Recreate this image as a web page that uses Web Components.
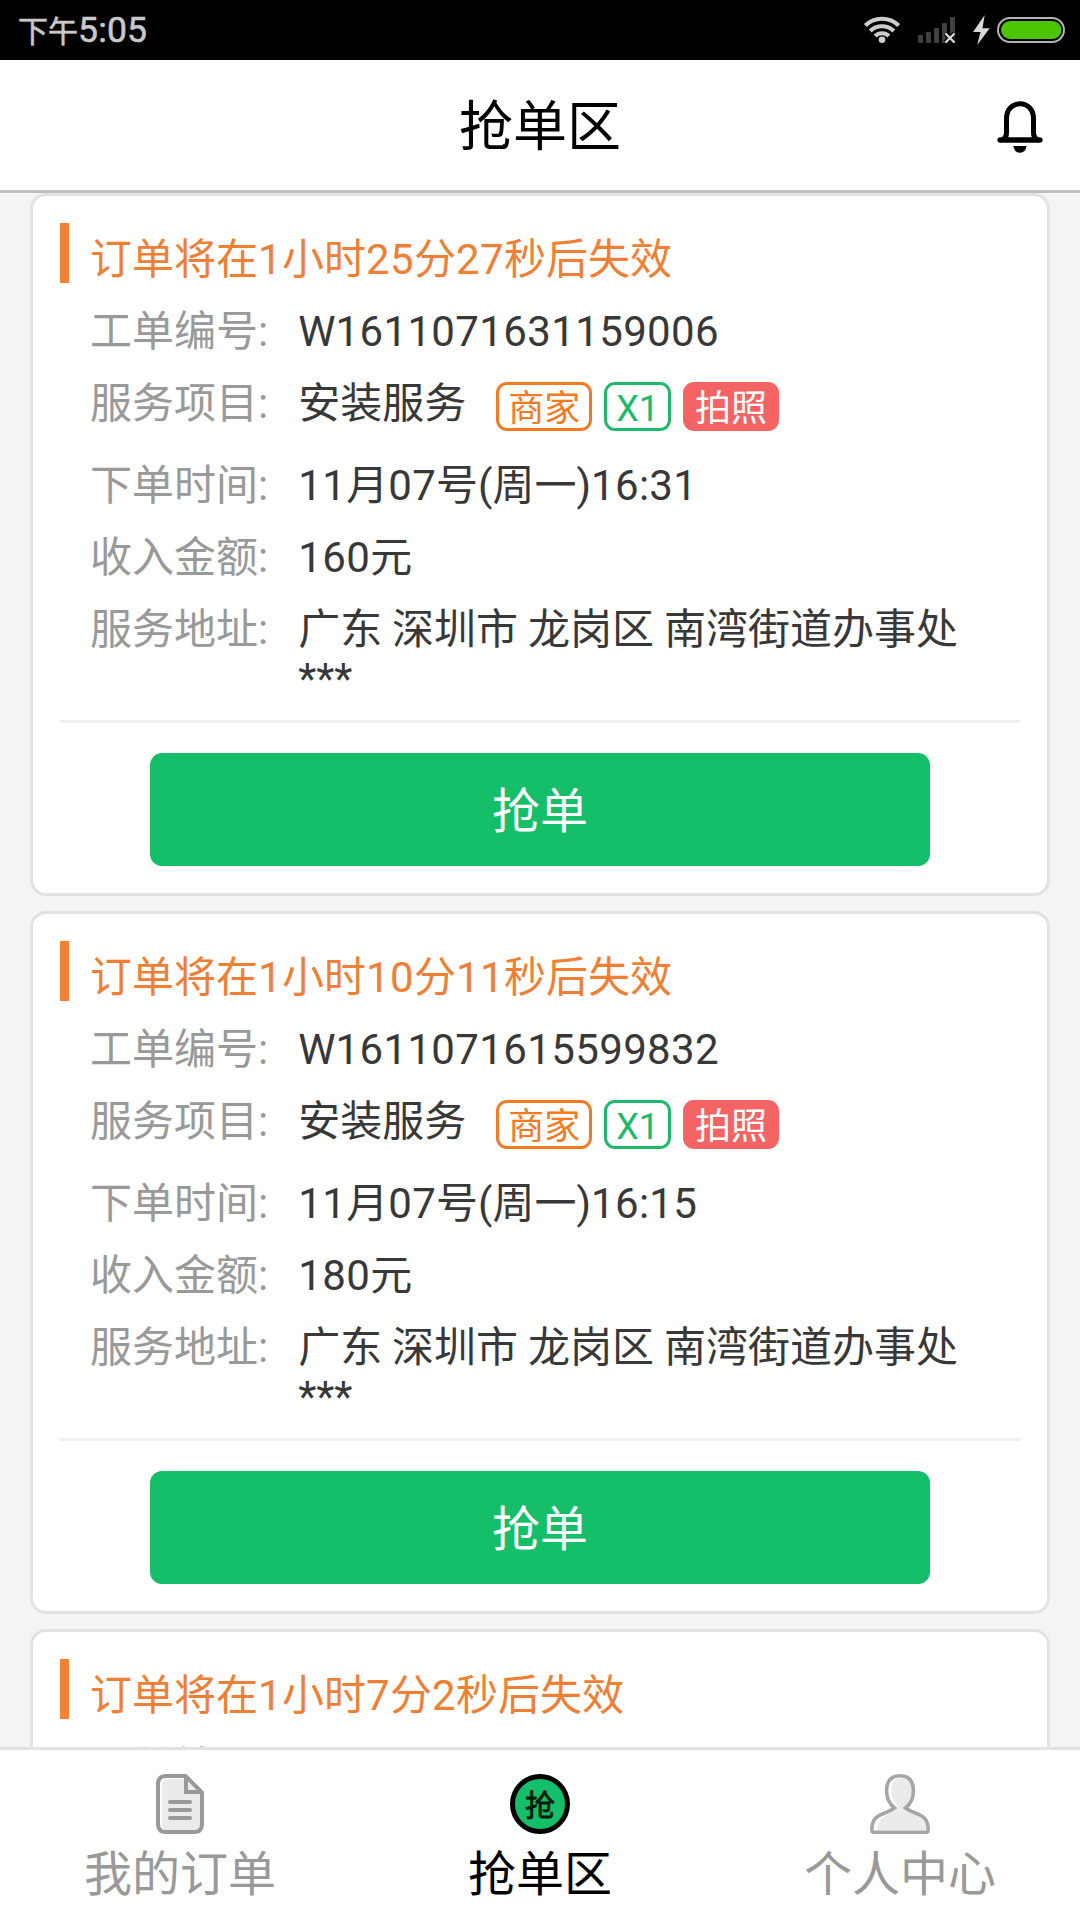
<!DOCTYPE html>
<html lang="zh-CN">
<head>
<meta charset="utf-8">
<title>抢单区</title>
<style>
html,body{margin:0;padding:0}
body{width:1080px;height:1920px;overflow:hidden;background:#f4f4f4;font-family:Roboto,"Noto Sans CJK SC",sans-serif;color:#383838}
</style>
</head>
<body>
<grab-app></grab-app>
<script>
const define = (name, html, init) => {
  const t = document.createElement('template');
  t.innerHTML = html;
  customElements.define(name, class extends HTMLElement {
    constructor() {
      super();
      this.attachShadow({mode: 'open'}).append(t.content.cloneNode(true));
    }
    connectedCallback() { if (init) init(this, this.shadowRoot); }
  });
};
// Digits sit on a whole-pixel advance; wrap each run so only digits are spaced.
const spaced = s => s.replace(/\d+/g, '<b>$&</b>');

define('status-bar', `
<style>
:host{display:flex;height:60px;flex:none;background:#000;color:#c8c8c8;justify-content:space-between;align-items:flex-start;padding:0 10px 0 18px;box-sizing:border-box}
.time{display:flex;align-items:baseline;line-height:58px;padding-top:1px;-webkit-text-stroke:.6px #c8c8c8}
.cn{font-size:30px}
.num{font-size:35.500px;letter-spacing:.2px}
svg{display:block}
</style>
<div class="time"><span class="cn">下午</span><span class="num">5:05</span></div>
<svg width="210" height="60" viewBox="860 0 210 60" fill="none">
  <g stroke="#cdcdcd" stroke-width="4.2">
    <path d="M865.3 25.5A24 24 0 0 1 898.700 25.500"/>
    <path d="M870.2 31A17 17 0 0 1 893.8 31"/>
    <path d="M875.1 36A10 10 0 0 1 888.900 36"/>
  </g>
  <circle cx="882" cy="39.800" r="3.3" fill="#cdcdcd"/>
  <g fill="#404040">
    <rect x="918" y="35" width="5" height="8" rx="1"/><rect x="926" y="32" width="5" height="11" rx="1"/>
    <rect x="934" y="28" width="5" height="15" rx="1"/><rect x="942" y="23" width="5" height="20" rx="1"/>
    <rect x="950" y="17" width="5" height="26" rx="1"/>
  </g>
  <path d="M945.500 33.500l9 9M954.500 33.500l-9 9" stroke="#000" stroke-width="5"/>
  <path d="M945.500 33.500l9 9M954.500 33.500l-9 9" stroke="#d8d8d8" stroke-width="2.4"/>
  <path d="M984.700 15L973 32h7.500L977.200 45 989.700 28.300h-7.200Z" fill="#d8d8d8"/>
  <rect x="998" y="18" width="66" height="24" rx="12" stroke="#b4b4b4" stroke-width="2"/>
  <rect x="1001" y="21" width="60.500" height="18" rx="9" fill="#4cc404"/>
</svg>`);

define('title-bar', `
<style>
:host{display:grid;grid-template-columns:1fr auto 1fr;align-items:center;height:133px;flex:none;box-sizing:border-box;background:#fff;border-bottom:3px solid #bfbfbf;color:#000}
h1{grid-column:2;margin:0;padding-top:6px;font-weight:400;font-size:54px;line-height:64px}
svg{justify-self:end;margin:4px 36px 0 0;display:block}
</style>
<h1><slot></slot></h1>
<svg width="48" height="54" viewBox="0 0 48 54" fill="none" stroke="#000">
  <path d="M7.500 39Q10.500 37 10.500 33V18.500C10.500 9.500 16.500 3.800 24 3.800S37.500 9.500 37.500 18.500V33Q37.500 37 40.500 39" stroke-width="5"/>
  <path d="M4.200 40H43.800" stroke-width="5.600" stroke-linecap="round"/>
  <path d="M17.400 46H30.600Q29.500 52.700 24 52.700T17.400 46Z" fill="#000" stroke="none"/>
</svg>`);

define('order-tag', `
<style>
:host{display:block;box-sizing:border-box;height:49px;padding:0 9px;border:3px solid var(--c);border-radius:11px;color:var(--c);font-size:36px;line-height:49px}
:host([kind=merchant]){--c:#f37a22}
:host([kind=count]){--c:#1fb96b}
:host([kind=photo]){--c:#f56464;background:#f56464;color:#fff}
</style><slot></slot>`);

define('order-row', `
<style>
:host{display:flex;gap:30px;font-size:42px;line-height:49px}
.label{color:#999;white-space:nowrap}
.value{flex:1;display:flex;min-width:0}
</style>
<span class="label"></span><div class="value"><slot></slot></div>`,
(el, r) => { r.querySelector('.label').textContent = el.getAttribute('label') + ':'; });

define('grab-button', `
<style>
:host{display:block}
button{display:block;width:100%;height:113px;border:0;border-radius:12px;background:#15bf69;color:#fff;font:400 48px/56px Roboto,"Noto Sans CJK SC",sans-serif;padding:4px 0 0}
</style><button><slot></slot></button>`);

const cardStyle = `
<style>
:host{display:block;flex:none;height:703px;box-sizing:border-box;border:3px solid #e2e2e2;border-radius:16px;background:#fff;padding:27px 27px 0}
header{display:flex;gap:21px;height:60px;color:#ee8036;font-size:42px;line-height:49px}
header i{width:9px;background:#f58233}
header span{padding-top:12px}
b{font-weight:400;letter-spacing:.37px}
.rows{display:flex;flex-direction:column;gap:23px;padding:24px 30px 17px}
.service{height:59px}
.tags{display:flex;gap:12px;padding:3px 0 0 30px}
.addr{display:block;word-spacing:-.5px}
hr{margin:0;border:0;height:3px;background:#f0f0f0}
grab-button{margin:30px 90px 0}
</style>
<header><i></i><span id="expire"></span></header>`;
const setExpire = (el, r) => {
  r.getElementById('expire').innerHTML = spaced('订单将在' + el.getAttribute('left') + '后失效');
};

define('order-card', cardStyle + `
<div class="rows">
  <order-row label="工单编号"><span id="no"></span></order-row>
  <order-row label="服务项目" class="service"><span>安装服务</span><div class="tags"><order-tag kind="merchant">商家</order-tag><order-tag kind="count">X1</order-tag><order-tag kind="photo">拍照</order-tag></div></order-row>
  <order-row label="下单时间"><span id="time"></span></order-row>
  <order-row label="收入金额"><span id="income"></span></order-row>
  <order-row label="服务地址"><span class="addr">广东 深圳市 龙岗区 南湾街道办事处<br>***</span></order-row>
</div>
<hr>
<grab-button>抢单</grab-button>`,
(el, r) => {
  setExpire(el, r);
  for (const k of ['no', 'time', 'income']) r.getElementById(k).innerHTML = spaced(el.getAttribute(k));
});

// Card scrolled partly below the navigation: only its first row is rendered.
define('order-peek', cardStyle + `
<div class="rows"><order-row label="工单编号"></order-row></div>`, setExpire);

define('nav-item', `
<style>
:host{flex:1;display:flex;flex-direction:column;align-items:center;padding-top:24px;color:#999;font-size:48px;line-height:56px;gap:13px}
:host([active]){color:#000}
::slotted(*){display:block;flex:none}
</style><slot name="icon"></slot><span><slot></slot></span>`);

define('nav-bar', `
<style>
:host{display:flex;height:173px;flex:none;box-sizing:border-box;border-top:3px solid #e2e2e2;background:#fff}
.coin{width:60px;height:60px;box-sizing:border-box;border:5px solid #000;border-radius:50%;background:#15bf69;color:#001a0c;font-size:30px;line-height:53px;text-align:center;-webkit-text-stroke:.8px #001a0c}
</style>
<nav-item>
  <svg slot="icon" width="48" height="60" viewBox="0 0 48 60" fill="none" stroke="#999">
    <path d="M10 2H29.500L46 18.500V50Q46 58 38 58H10Q2 58 2 50V10Q2 2 10 2Z" fill="#fff" stroke="none"/>
    <path d="M11 5H28V20H45V50Q45 56 38 56H11Q6 56 6 50V10Q6 5 11 5Z" fill="#ebebeb" stroke="none"/>
    <path d="M32 8L43 18H32Z" fill="#ebebeb" stroke="none"/>
    <path d="M10 2H29.500L46 18.500V50Q46 58 38 58H10Q2 58 2 50V10Q2 2 10 2ZM30 2V18H46" stroke-width="4"/>
    <path d="M14 28H34M14 36H34M14 44H34" stroke-width="4" stroke-linecap="round"/>
  </svg>我的订单
</nav-item>
<nav-item active><div slot="icon" class="coin">抢</div>抢单区</nav-item>
<nav-item>
  <svg slot="icon" width="60" height="60" viewBox="0 0 60 60">
    <path d="M32 4C24 4 21.500 9 21.500 17C21.500 25 26 29 29 34C22 38 16 41 12 44C9 47 8 51 8 56H56C56 51 55 46.500 51 44C46 41 39 39 33 34C38 30 41.500 24 41.500 17C41.500 9 39 4 32 4Z" fill="#ebebeb"/>
    <path d="M30 1.800C20 1.800 16.600 8 16.600 17C16.600 24 19.500 30 24.500 34C19 38 12 39.500 7.500 42.500C3 45.500 1.800 51 1.800 56Q1.800 58.200 4 58.200H56Q58.200 58.200 58.200 56C58.200 51 57 45.500 52.500 42.500C48 39.500 41 38 35.500 34C40.500 30 43.400 24 43.400 17C43.400 8 40 1.800 30 1.800Z" fill="none" stroke="#a6a6a6" stroke-width="3.600"/>
  </svg>个人中心
</nav-item>`);

define('grab-app', `
<style>
:host{display:flex;flex-direction:column;width:1080px;height:1920px;overflow:hidden}
main{flex:1;min-height:0;overflow:hidden;display:flex;flex-direction:column;gap:15px;padding:0 30px;background:#f4f4f4}
</style>
<status-bar></status-bar>
<title-bar>抢单区</title-bar>
<main>
  <order-card left="1小时25分27秒" no="W1611071631159006" time="11月07号(周一)16:31" income="160元"></order-card>
  <order-card left="1小时10分11秒" no="W1611071615599832" time="11月07号(周一)16:15" income="180元"></order-card>
  <order-peek left="1小时7分2秒"></order-peek>
</main>
<nav-bar></nav-bar>`);
</script>
</body>
</html>
